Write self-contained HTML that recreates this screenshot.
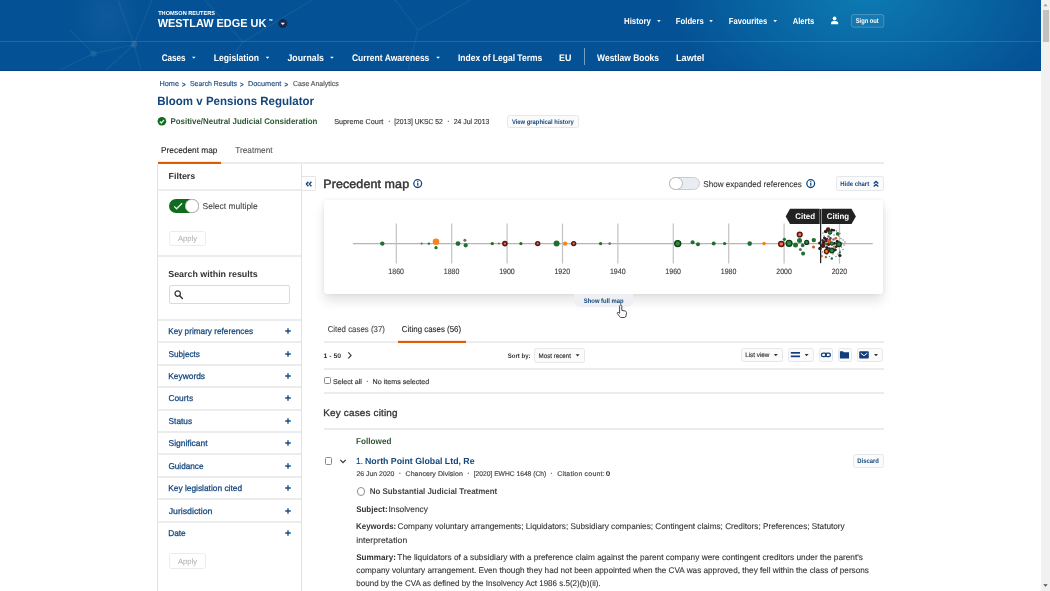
<!DOCTYPE html>
<html lang="en">
<head>
<meta charset="utf-8">
<title>Bloom v Pensions Regulator - Case Analytics | Westlaw Edge UK</title>
<style>
*{box-sizing:border-box;margin:0;padding:0}
html,body{width:1050px;height:591px;overflow:hidden;background:#fff;font-family:"Liberation Sans",sans-serif}
#page{position:relative;width:1050px;height:591px;overflow:hidden;background:#fff}
.t{position:absolute;white-space:pre;display:block;transform-origin:0 50%;text-rendering:geometricPrecision}
.a{position:absolute;display:block}
.hl{position:absolute;height:2px;background:#ececec}
.btn{position:absolute;border:1px solid #e6e7ea;border-radius:2.5px;background:#fbfbfc}
#hdr{left:0;top:0;width:1041px;height:70.5px;
 background:
  radial-gradient(ellipse 195px 125px at 865px -6px, rgba(14,126,181,.92), rgba(14,126,181,0) 100%),
  radial-gradient(ellipse 34px 40px at 106px 16px, rgba(255,255,255,.045), rgba(255,255,255,0) 100%),
  #045295;
 border-bottom:1px solid #03457f}
</style>
</head>
<body>
<div id="page">
<!-- header -->
<div id="hdr" class="a"></div>
<div class="a" style="left:0;top:41px;width:1041px;height:1px;background:rgba(255,255,255,.13)"></div>
<div class="a" style="left:584.3px;top:48px;width:1px;height:16.5px;background:rgba(255,255,255,.45)"></div>
<svg class="a" style="left:0;top:0" width="1041" height="70" viewBox="0 0 1041 70">
 <!-- decorative network -->
 <g stroke="#ffffff" stroke-opacity=".06" stroke-width="1.2" fill="none">
  <path d="M134 44.500L93.500 53.600L60 70M134 44.500L118 0M134 44.500L152 0M134 44.500L141 70M134 44.500L106 70M93.500 53.600L70 30"/>
  <path d="M205 0L243 42L312 0M243 42L222 70M395 0L418 30L470 0M418 30L408 70"/>
 </g>
 <circle cx="134" cy="44.500" r="3.200" fill="#fff" fill-opacity=".09"/>
 <circle cx="93.500" cy="53.600" r="3.200" fill="#fff" fill-opacity=".08"/>
 <!-- product dropdown -->
 <circle cx="282.8" cy="23.6" r="4.5" fill="#17294d"/>
 <path d="M280.6 22.7h4.4l-2.2 2.3z" fill="#fff"/>
 <!-- carets -->
 <g fill="#fff">
  <path d="M657.1 20.1h3.6l-1.8 2.1z"/><path d="M709.3 20.1h3.6l-1.8 2.1z"/><path d="M773.4 20.1h3.6l-1.8 2.1z"/>
  <path d="M192.0 56.7h3.6l-1.8 2.1z"/><path d="M265.7 56.7h3.6l-1.8 2.1z"/><path d="M330.1 56.7h3.6l-1.8 2.1z"/><path d="M436.3 56.7h3.6l-1.8 2.1z"/>
 </g>
 <!-- user -->
 <circle cx="834.6" cy="18.4" r="1.9" fill="#fff"/>
 <path d="M831 24.3v-1.2c0-1.4 1.7-2.3 3.6-2.3s3.6 .9 3.6 2.3v1.2z" fill="#fff"/>
 <rect x="851.4" y="14.6" width="32.4" height="12.6" rx="2" fill="#fff" fill-opacity=".05" stroke="#fff" stroke-opacity=".22"/>
</svg>

<!-- scrollbar -->
<div class="a" style="left:1041px;top:0;width:9px;height:591px;background:#f1f1f1"></div>
<div class="a" style="left:1042.5px;top:9.5px;width:6.3px;height:32.5px;background:#c1c1c1"></div>
<svg class="a" style="left:1041px;top:0" width="9" height="591" viewBox="0 0 9 591">
 <path d="M2.3 6.2L4.5 3.8L6.7 6.2z" fill="#a3a3a3"/><path d="M2.3 584.2L4.5 586.8L6.7 584.2z" fill="#505050"/>
</svg>

<!-- title area -->
<svg class="a" style="left:156px;top:115px" width="12" height="12" viewBox="0 0 12 12">
 <circle cx="5.9" cy="6.3" r="4.3" fill="#0f6a1a"/><path d="M3.800 6.500l1.500 1.500l2.700-3" stroke="#d8f7dc" stroke-width="1.300" fill="none"/>
</svg>
<div class="btn" style="left:507.2px;top:115.1px;width:71.5px;height:13.4px"></div>

<!-- tabs -->
<div class="hl" style="left:157.6px;top:162px;width:726px"></div>
<div class="a" style="left:157.6px;top:162px;width:63.8px;height:2px;background:#e05a00;box-shadow:0 -0.5px 0 rgba(224,90,0,.3)"></div>

<!-- sidebar -->
<div class="a" style="left:157.4px;top:164px;width:1px;height:427px;background:#e2e2e2"></div>
<div class="a" style="left:300.9px;top:164px;width:1px;height:427px;background:#e2e2e2"></div>
<div class="hl" style="left:158px;top:189px;width:143px"></div>
<div class="hl" style="left:158px;top:254.7px;width:143px"></div>
<!-- toggle on -->
<div class="a" style="left:169px;top:199px;width:29.5px;height:13.6px;border-radius:7px;background:#116b1e"></div>
<div class="a" style="left:185px;top:199px;width:13.6px;height:13.6px;border-radius:50%;background:#fff;border:1px solid #c4c4c4"></div>
<svg class="a" style="left:172px;top:201px" width="12" height="10" viewBox="0 0 12 10"><path d="M2.200 5.400l2.400 2.400l5.500-5.500" stroke="#dcf7df" stroke-width="1.300" fill="none"/></svg>
<div class="btn" style="left:169.3px;top:230.6px;width:36.5px;height:15.6px;background:#fff;border-color:#ececec"></div>
<div class="a" style="left:169.3px;top:284.8px;width:121.2px;height:18.9px;border:1px solid #dadada;border-radius:2px;background:#fff"></div>
<svg class="a" style="left:173px;top:289px" width="12" height="12" viewBox="0 0 12 12"><circle cx="4.7" cy="4.6" r="2.7" fill="none" stroke="#333" stroke-width="1.2"/><path d="M6.7 6.7l2.7 2.8" stroke="#333" stroke-width="1.4" stroke-linecap="round"/></svg>
<div class="hl" style="left:158px;top:318.75px;width:143px"></div>
<div class="hl" style="left:158px;top:341.25px;width:143px"></div>
<div class="hl" style="left:158px;top:363.65px;width:143px"></div>
<div class="hl" style="left:158px;top:386.05px;width:143px"></div>
<div class="hl" style="left:158px;top:408.55px;width:143px"></div>
<div class="hl" style="left:158px;top:430.95px;width:143px"></div>
<div class="hl" style="left:158px;top:453.35px;width:143px"></div>
<div class="hl" style="left:158px;top:475.75px;width:143px"></div>
<div class="hl" style="left:158px;top:498.15px;width:143px"></div>
<div class="hl" style="left:158px;top:520.55px;width:143px"></div>
<svg class="a" style="left:284px;top:327.3px" width="8" height="8" viewBox="0 0 8 8"><path d="M1.200 4H6.800M4 1.200V6.800" stroke="#1a4f88" stroke-width="1.400" fill="none"/></svg>
<svg class="a" style="left:284px;top:349.7px" width="8" height="8" viewBox="0 0 8 8"><path d="M1.200 4H6.800M4 1.200V6.800" stroke="#1a4f88" stroke-width="1.400" fill="none"/></svg>
<svg class="a" style="left:284px;top:372.1px" width="8" height="8" viewBox="0 0 8 8"><path d="M1.200 4H6.800M4 1.200V6.800" stroke="#1a4f88" stroke-width="1.400" fill="none"/></svg>
<svg class="a" style="left:284px;top:394.4px" width="8" height="8" viewBox="0 0 8 8"><path d="M1.200 4H6.800M4 1.200V6.800" stroke="#1a4f88" stroke-width="1.400" fill="none"/></svg>
<svg class="a" style="left:284px;top:416.8px" width="8" height="8" viewBox="0 0 8 8"><path d="M1.200 4H6.800M4 1.200V6.800" stroke="#1a4f88" stroke-width="1.400" fill="none"/></svg>
<svg class="a" style="left:284px;top:439.1px" width="8" height="8" viewBox="0 0 8 8"><path d="M1.200 4H6.800M4 1.200V6.800" stroke="#1a4f88" stroke-width="1.400" fill="none"/></svg>
<svg class="a" style="left:284px;top:461.7px" width="8" height="8" viewBox="0 0 8 8"><path d="M1.200 4H6.800M4 1.200V6.800" stroke="#1a4f88" stroke-width="1.400" fill="none"/></svg>
<svg class="a" style="left:284px;top:484.3px" width="8" height="8" viewBox="0 0 8 8"><path d="M1.200 4H6.800M4 1.200V6.800" stroke="#1a4f88" stroke-width="1.400" fill="none"/></svg>
<svg class="a" style="left:284px;top:506.7px" width="8" height="8" viewBox="0 0 8 8"><path d="M1.200 4H6.800M4 1.200V6.800" stroke="#1a4f88" stroke-width="1.400" fill="none"/></svg>
<svg class="a" style="left:284px;top:529.3px" width="8" height="8" viewBox="0 0 8 8"><path d="M1.200 4H6.800M4 1.200V6.800" stroke="#1a4f88" stroke-width="1.400" fill="none"/></svg>
<div class="btn" style="left:169.1px;top:553.2px;width:36.8px;height:15.8px;background:#fff;border-color:#ececec"></div>

<!-- main head -->
<div class="a" style="left:301.9px;top:176px;width:13.8px;height:14.6px;border:1px solid #e3e3e3;border-left:none;border-radius:0 2px 2px 0;background:#fff"></div>
<svg class="a" style="left:304px;top:179px" width="10" height="10" viewBox="0 0 10 10"><path d="M4.4 2.8L2.4 5l2 2.200M7.400 2.800L5.400 5l2 2.200" stroke="#14467c" stroke-width="1.400" fill="none"/></svg>
<svg class="a" style="left:412px;top:178px" width="12" height="12" viewBox="0 0 12 12"><circle cx="5.7" cy="5.6" r="3.9" fill="none" stroke="#14467c" stroke-width="1.3"/><rect x="5.1" y="5" width="1.3" height="2.7" fill="#14467c"/><rect x="5.1" y="3.2" width="1.3" height="1.2" fill="#14467c"/></svg>
<svg class="a" style="left:804.7px;top:178.1px" width="12" height="12" viewBox="0 0 12 12"><circle cx="5.7" cy="5.6" r="3.9" fill="none" stroke="#14467c" stroke-width="1.3"/><rect x="5.1" y="5" width="1.3" height="2.7" fill="#14467c"/><rect x="5.1" y="3.2" width="1.3" height="1.2" fill="#14467c"/></svg>
<!-- toggle off -->
<div class="a" style="left:669.2px;top:176.6px;width:30.7px;height:13.8px;border-radius:7px;background:#e9edf3;border:1px solid #c9cdd3"></div>
<div class="a" style="left:669.2px;top:176.6px;width:13.8px;height:13.8px;border-radius:50%;background:#fff;border:1px solid #b9b9b9"></div>
<div class="btn" style="left:835.5px;top:176.4px;width:48px;height:14.2px"></div>
<svg class="a" style="left:871px;top:179px" width="10" height="10" viewBox="0 0 10 10"><path d="M2.7 4.5L5 2.4l2.3 2.1M2.7 7.5L5 5.4l2.3 2.1" stroke="#14467c" stroke-width="1.35" fill="none"/></svg>

<!-- chart card -->
<div class="a" style="left:323.8px;top:200px;width:559.7px;height:93.6px;background:#fff;border-radius:3px;box-shadow:0 7px 12px rgba(0,0,0,.11),0 0 4px rgba(0,0,0,.07)"></div>
<div class="a" style="left:574.3px;top:293.6px;width:58.4px;height:13px;background:#eef0f3;border-radius:0 0 6px 6px"></div>
<svg class="a" style="left:324px;top:200px" width="560" height="94" viewBox="324 200 560 94">
<path d="M352.9 243.6H872.7" stroke="#b4b4b4" stroke-width="1.1" fill="none"/>
<path d="M396.3 223.6V263.6" stroke="#c2c2c2" stroke-width="1.2" fill="none"/>
<path d="M451.7 223.6V263.6" stroke="#c2c2c2" stroke-width="1.2" fill="none"/>
<path d="M507.1 223.6V263.6" stroke="#c2c2c2" stroke-width="1.2" fill="none"/>
<path d="M562.5 223.6V263.6" stroke="#c2c2c2" stroke-width="1.2" fill="none"/>
<path d="M617.9 223.6V263.6" stroke="#c2c2c2" stroke-width="1.2" fill="none"/>
<path d="M673.3 223.6V263.6" stroke="#c2c2c2" stroke-width="1.2" fill="none"/>
<path d="M728.7 223.6V263.6" stroke="#c2c2c2" stroke-width="1.2" fill="none"/>
<path d="M784.1 223.6V263.6" stroke="#c2c2c2" stroke-width="1.2" fill="none"/>
<path d="M839.5 223.6V263.6" stroke="#c2c2c2" stroke-width="1.2" fill="none"/>
<circle cx="382.3" cy="243.6" r="2.2" fill="#1f7030"/>
<circle cx="421.7" cy="243.6" r="1.1" fill="#6b6b6b"/>
<circle cx="428.9" cy="243.6" r="1.2" fill="#1f7030"/>
<circle cx="436.0" cy="241.8" r="3.3" fill="#f4841f"/>
<circle cx="436.0" cy="247.7" r="1.6" fill="#1f7030"/>
<circle cx="458.0" cy="243.6" r="2.4" fill="#1f7030"/>
<circle cx="464.9" cy="240.2" r="1.5" fill="#6b6b6b"/>
<circle cx="465.7" cy="245.3" r="2.1" fill="#1f7030"/>
<circle cx="492.3" cy="243.6" r="1.7" fill="#1f7030"/>
<circle cx="498.9" cy="243.6" r="1.0" fill="#6b6b6b"/>
<circle cx="504.9" cy="243.6" r="2.00" fill="#e9735c" stroke="#5e1610" stroke-width="1.6"/>
<circle cx="520.9" cy="243.6" r="1.6" fill="#1f7030"/>
<circle cx="537.7" cy="243.6" r="1.90" fill="#e9735c" stroke="#5e1610" stroke-width="1.6"/>
<circle cx="556.6" cy="243.6" r="3.0" fill="#1f7030"/>
<circle cx="565.1" cy="243.6" r="2.2" fill="#f4841f"/>
<circle cx="573.7" cy="243.6" r="1.90" fill="#e9735c" stroke="#5e1610" stroke-width="1.6"/>
<circle cx="600.6" cy="243.6" r="1.7" fill="#1f7030"/>
<circle cx="609.7" cy="243.6" r="1.3" fill="#6b6b6b"/>
<circle cx="677.7" cy="243.6" r="3.00" fill="#2c8a3f" stroke="#0c3f14" stroke-width="1.4"/>
<circle cx="692.6" cy="242.3" r="2.0" fill="#1f7030"/>
<circle cx="698.0" cy="244.3" r="2.0" fill="#1f7030"/>
<circle cx="713.7" cy="243.6" r="2.0" fill="#1f7030"/>
<circle cx="724.6" cy="243.6" r="1.6" fill="#1f7030"/>
<circle cx="749.7" cy="243.6" r="2.3" fill="#1f7030"/>
<circle cx="764.1" cy="243.6" r="1.8" fill="#f4841f"/>
<circle cx="781.3" cy="244.0" r="2.55" fill="#e9735c" stroke="#5e1610" stroke-width="1.5"/>
<circle cx="784.4" cy="239.3" r="1.6" fill="#1f7030"/>
<circle cx="789.1" cy="243.3" r="2.90" fill="#2c8a3f" stroke="#0c3f14" stroke-width="1.4"/>
<circle cx="795.5" cy="245.1" r="2.5" fill="#1f7030"/>
<circle cx="799.5" cy="240.4" r="2.5" fill="#1f7030"/>
<circle cx="799.7" cy="234.5" r="2.35" fill="#e9735c" stroke="#5e1610" stroke-width="1.5"/>
<circle cx="800.4" cy="249.4" r="1.5" fill="#6b6b6b"/>
<circle cx="802.7" cy="245.4" r="1.8" fill="#1f7030"/>
<circle cx="803.1" cy="253.5" r="2.0" fill="#1f7030"/>
<circle cx="806.7" cy="242.4" r="1.95" fill="#2c8a3f" stroke="#0c3f14" stroke-width="1.3"/>
<circle cx="813.8" cy="240.1" r="2.2" fill="#1f7030"/>
<circle cx="813.5" cy="247.1" r="1.5" fill="#d4552f"/>
<circle cx="819.6" cy="243.0" r="1.5" fill="#222222"/>
<circle cx="820.0" cy="248.5" r="1.8" fill="#222222"/>
<circle cx="821.6" cy="256.2" r="1.4" fill="#f4841f"/>
<circle cx="838.5" cy="236.0" r="0.7" fill="#777"/>
<circle cx="841.0" cy="238.5" r="0.7" fill="#777"/>
<circle cx="843.0" cy="240.0" r="0.7" fill="#777"/>
<circle cx="842.0" cy="243.0" r="0.7" fill="#777"/>
<circle cx="844.0" cy="245.0" r="0.7" fill="#777"/>
<circle cx="841.5" cy="247.0" r="0.7" fill="#777"/>
<circle cx="843.0" cy="249.5" r="0.7" fill="#777"/>
<circle cx="840.0" cy="251.0" r="0.7" fill="#777"/>
<circle cx="838.0" cy="254.0" r="0.7" fill="#777"/>
<circle cx="836.0" cy="256.5" r="0.7" fill="#777"/>
<circle cx="824.0" cy="236.0" r="0.7" fill="#777"/>
<circle cx="823.0" cy="233.0" r="0.7" fill="#777"/>
<circle cx="834.0" cy="235.0" r="0.7" fill="#777"/>
<circle cx="836.5" cy="231.0" r="0.7" fill="#777"/>
<circle cx="827.0" cy="254.5" r="0.7" fill="#777"/>
<circle cx="829.5" cy="256.5" r="0.7" fill="#777"/>
<circle cx="833.0" cy="254.0" r="0.7" fill="#777"/>
<circle cx="845.0" cy="242.0" r="0.7" fill="#777"/>
<circle cx="840.0" cy="233.5" r="0.7" fill="#777"/>
<circle cx="822.5" cy="252.0" r="0.7" fill="#777"/>
<circle cx="825.7" cy="231.5" r="1.8" fill="#222222"/>
<circle cx="831.8" cy="230.0" r="1.5" fill="#222222"/>
<circle cx="833.8" cy="230.2" r="1.3" fill="#222222"/>
<circle cx="828.1" cy="229.5" r="2.2" fill="#5e1610"/>
<circle cx="830.0" cy="232.5" r="1.80" fill="#2c8a3f" stroke="#0c3f14" stroke-width="1.0"/>
<circle cx="837.6" cy="233.9" r="1.8" fill="#1f7030"/>
<circle cx="826.4" cy="240.0" r="2.2" fill="#5e1610"/>
<circle cx="829.1" cy="241.0" r="2.2" fill="#d4552f"/>
<circle cx="835.8" cy="238.3" r="1.4" fill="#d4552f"/>
<circle cx="823.6" cy="242.4" r="1.8" fill="#222222"/>
<circle cx="823.0" cy="245.8" r="2.3" fill="#5e1610"/>
<circle cx="826.6" cy="244.0" r="1.5" fill="#1f7030"/>
<circle cx="831.8" cy="243.6" r="1.70" fill="#2c8a3f" stroke="#0c3f14" stroke-width="1.0"/>
<circle cx="837.2" cy="241.3" r="1.5" fill="#222222"/>
<circle cx="834.2" cy="246.7" r="1.4" fill="#e9735c"/>
<circle cx="838.9" cy="244.3" r="2.35" fill="#2c8a3f" stroke="#0c3f14" stroke-width="1.3"/>
<circle cx="826.5" cy="251.5" r="2.05" fill="#f4841f" stroke="#5e1610" stroke-width="1.3"/>
<circle cx="831.8" cy="250.5" r="2.35" fill="#2c8a3f" stroke="#0c3f14" stroke-width="1.3"/>
<circle cx="835.2" cy="249.8" r="1.5" fill="#222222"/>
<circle cx="831.8" cy="258.5" r="1.2" fill="#1f7030"/>
<circle cx="839.9" cy="255.5" r="1.6" fill="#222222"/>
<circle cx="825.9" cy="257.1" r="1.2" fill="#6b6b6b"/>
<circle cx="839.9" cy="252.5" r="1.0" fill="#1f7030"/>
<circle cx="828.5" cy="236.5" r="1.3" fill="#6b6b6b"/>
<circle cx="833.5" cy="239.5" r="1.2" fill="#6b6b6b"/>
<circle cx="824.5" cy="238.0" r="1.5" fill="#222222"/>
<circle cx="826.8" cy="247.6" r="1.6" fill="#222222"/>
<circle cx="829.2" cy="248.6" r="1.4" fill="#333"/>
<circle cx="834.6" cy="243.4" r="1.4" fill="#222222"/>
<circle cx="836.2" cy="246.8" r="1.3" fill="#222222"/>
<circle cx="828.6" cy="244.6" r="1.5" fill="#5e1610"/>
<circle cx="830.4" cy="238.4" r="1.3" fill="#444"/>
<circle cx="822.6" cy="240.2" r="1.3" fill="#333"/>
<path d="M820.6 209V263.2" stroke="#222" stroke-width="1.25" fill="none"/>
<path d="M785.7 216.5L790 208.8H819.7V224.1H790z" fill="#222"/>
<path d="M821.6 208.8H851.5L855.9 216.5L851.5 224.1H821.6z" fill="#222"/>
</svg>
<!-- cursor -->
<svg class="a" style="left:613px;top:303px" width="18" height="18" viewBox="0 0 18 18"><path d="M7.2 2.2c.9-.4 1.6.2 1.6 1v4.2l3.3.6c1 .2 1.5.9 1.400 1.800l-.5 3.200c-.1.900-.800 1.500-1.700 1.500h-3.200c-.6 0-1.100-.3-1.500-.8l-2.300-3.300c-.4-.600.300-1.400 1-1l1.300.9v-7c0-.5.200-.9.600-1.100z" fill="#fff" stroke="#333" stroke-width=".9"/></svg>

<!-- list area -->
<div class="hl" style="left:324px;top:341px;width:560px"></div>
<div class="a" style="left:397.5px;top:341px;width:68px;height:2px;background:#e05a00;box-shadow:0 -0.5px 0 rgba(224,90,0,.3)"></div>
<svg class="a" style="left:345px;top:350px" width="10" height="10" viewBox="0 0 10 10"><path d="M3.3 2.4l2.800 3l-2.800 3" stroke="#333" stroke-width="1.1" fill="none"/></svg>
<div class="btn" style="left:534.2px;top:348px;width:50.7px;height:14.5px"></div>
<div class="btn" style="left:740.6px;top:347.5px;width:42.8px;height:14.7px"></div>
<div class="btn" style="left:788px;top:347.5px;width:25.9px;height:14.7px"></div>
<div class="btn" style="left:818.5px;top:347.5px;width:14.5px;height:14.7px"></div>
<div class="btn" style="left:837.5px;top:347.5px;width:14.9px;height:14.7px"></div>
<div class="btn" style="left:857px;top:347.5px;width:26.2px;height:14.7px"></div>
<svg class="a" style="left:534px;top:347px" width="350" height="16" viewBox="534 347 350 16">
 <g fill="#333"><path d="M575.600 354.200h4l-2 2.200z"/><path d="M773.800 354h4l-2 2.200z"/><path d="M804.600 354h4l-2 2.200z"/><path d="M874 354h4l-2 2.200z"/></g>
 <g fill="#123f7c">
  <rect x="790.800" y="352" width="9.200" height="1.700"/><rect x="790.800" y="355.500" width="9.200" height="1.700"/>
  <path d="M839.900 351.200h3l.9 1h5.200v6.400h-9.100z"/>
  <rect x="859.200" y="351.300" width="9.600" height="7.200" rx="1"/>
 </g>
 <path d="M860.700 353.200l3.300 2.500l3.300-2.500" stroke="#fff" stroke-width="1" fill="none"/>
 <g fill="none" stroke="#123f7c" stroke-width="1.300"><rect x="821.400" y="353.100" width="5" height="3.600" rx="1.800"/><rect x="825.400" y="353.100" width="5" height="3.600" rx="1.800"/></g>
</svg>
<div class="hl" style="left:324px;top:367.700px;width:560px"></div>
<div class="a" style="left:324px;top:377.4px;width:7px;height:7px;border:1px solid #8a8a8a;border-radius:1.5px;background:#fff"></div>
<div class="hl" style="left:324px;top:392.4px;width:560px"></div>
<div class="hl" style="left:324px;top:428px;width:560px"></div>
<div class="a" style="left:324.6px;top:457.2px;width:7.5px;height:7.5px;border:1px solid #8a8a8a;border-radius:1.5px;background:#fff"></div>
<svg class="a" style="left:338px;top:456px" width="10" height="10" viewBox="0 0 10 10"><path d="M2.300 3.900L5 6.600l2.700-2.700" stroke="#333" stroke-width="1.200" fill="none"/></svg>
<div class="btn" style="left:852.5px;top:454.1px;width:31.2px;height:13.5px"></div>
<div class="a" style="left:356.6px;top:487.4px;width:8.4px;height:8.4px;border:1px solid #8f8f8f;border-radius:50%;background:#fff"></div>

<div id="txt" style="position:absolute;left:0;top:0;width:1041px;height:591px;will-change:transform">
<span class="t" style="left:158px;top:9px;line-height:8px;font-size:5.8px;font-weight:700;color:#ffffff;transform:translate(0.20px,0.77px) scaleX(0.9623);">THOMSON REUTERS</span>
<span class="t" style="left:157px;top:15px;line-height:16px;font-size:11.6px;font-weight:700;color:#ffffff;transform:translate(0.68px,0.50px) scaleX(0.9427);">WESTLAW EDGE UK</span>
<span class="t" style="left:269px;top:18px;line-height:6px;font-size:4.2px;font-weight:400;color:#ffffff;transform:translate(0.02px,0.08px) scaleX(0.8498);-webkit-text-stroke:0.16px #ffffff;">™</span>
<span class="t" style="left:624px;top:15px;line-height:12px;font-size:8.8px;font-weight:700;color:#ffffff;transform:translate(0.07px,0.00px) scaleX(0.8832);">History</span>
<span class="t" style="left:675px;top:15px;line-height:12px;font-size:8.8px;font-weight:700;color:#ffffff;transform:translate(0.82px,0.00px) scaleX(0.8777);">Folders</span>
<span class="t" style="left:728px;top:15px;line-height:12px;font-size:8.8px;font-weight:700;color:#ffffff;transform:translate(0.83px,0.00px) scaleX(0.8625);">Favourites</span>
<span class="t" style="left:792px;top:15px;line-height:12px;font-size:8.8px;font-weight:700;color:#ffffff;transform:translate(0.78px,0.00px) scaleX(0.8589);">Alerts</span>
<span class="t" style="left:855px;top:16px;line-height:10px;font-size:6.8px;font-weight:700;color:#ffffff;letter-spacing:-0.021px;transform:translate(0.72px,0.98px) scaleX(0.8529);">Sign out</span>
<span class="t" style="left:161px;top:51px;line-height:13px;font-size:9.6px;font-weight:700;color:#ffffff;transform:translate(0.65px,0.95px) scaleX(0.8478);">Cases</span>
<span class="t" style="left:213px;top:51px;line-height:13px;font-size:9.6px;font-weight:700;color:#ffffff;transform:translate(0.87px,0.95px) scaleX(0.8910);">Legislation</span>
<span class="t" style="left:287px;top:51px;line-height:13px;font-size:9.6px;font-weight:700;color:#ffffff;transform:translate(0.50px,0.95px) scaleX(0.9107);">Journals</span>
<span class="t" style="left:351px;top:51px;line-height:13px;font-size:9.6px;font-weight:700;color:#ffffff;transform:translate(0.95px,0.95px) scaleX(0.8849);">Current Awareness</span>
<span class="t" style="left:457px;top:51px;line-height:13px;font-size:9.6px;font-weight:700;color:#ffffff;transform:translate(0.97px,0.95px) scaleX(0.8842);">Index of Legal Terms</span>
<span class="t" style="left:559px;top:51px;line-height:13px;font-size:9.6px;font-weight:700;color:#ffffff;transform:translate(0.05px,0.95px) scaleX(0.9222);">EU</span>
<span class="t" style="left:597px;top:51px;line-height:13px;font-size:9.6px;font-weight:700;color:#ffffff;transform:translate(0.10px,0.95px) scaleX(0.8819);">Westlaw Books</span>
<span class="t" style="left:676px;top:51px;line-height:13px;font-size:9.6px;font-weight:700;color:#ffffff;transform:translate(0.03px,0.95px) scaleX(0.9475);">Lawtel</span>
<span class="t" style="left:159px;top:78px;line-height:10px;font-size:7.2px;font-weight:400;color:#1b4a7e;transform:translate(0.55px,0.90px) scaleX(1.0113);-webkit-text-stroke:0.15px #1b4a7e;">Home</span>
<span class="t" style="left:181px;top:79px;line-height:10px;font-size:7.4px;font-weight:400;color:#14467c;transform:translate(0.91px,0.91px) scaleX(0.8378);-webkit-text-stroke:0.3px #14467c;">&gt;</span>
<span class="t" style="left:189px;top:78px;line-height:10px;font-size:7.2px;font-weight:400;color:#1b4a7e;transform:translate(1.00px,0.90px) scaleX(0.9637);-webkit-text-stroke:0.15px #1b4a7e;">Search Results</span>
<span class="t" style="left:240px;top:79px;line-height:10px;font-size:7.4px;font-weight:400;color:#14467c;transform:translate(0.01px,0.91px) scaleX(0.8378);-webkit-text-stroke:0.3px #14467c;">&gt;</span>
<span class="t" style="left:247px;top:78px;line-height:10px;font-size:7.2px;font-weight:400;color:#1b4a7e;transform:translate(0.93px,0.90px) scaleX(1.0193);-webkit-text-stroke:0.15px #1b4a7e;">Document</span>
<span class="t" style="left:284px;top:79px;line-height:10px;font-size:7.4px;font-weight:400;color:#14467c;transform:translate(0.51px,0.91px) scaleX(0.8378);-webkit-text-stroke:0.3px #14467c;">&gt;</span>
<span class="t" style="left:293px;top:78px;line-height:10px;font-size:7.2px;font-weight:400;color:#555555;transform:translate(0.04px,0.90px) scaleX(0.9683);-webkit-text-stroke:0.16px #555555;">Case Analytics</span>
<span class="t" style="left:157px;top:92px;line-height:17px;font-size:11.9px;font-weight:700;color:#14467c;transform:translate(0.25px,0.70px) scaleX(0.9686);">Bloom v Pensions Regulator</span>
<span class="t" style="left:170px;top:115px;line-height:12px;font-size:8.3px;font-weight:700;color:#2e5634;transform:translate(0.51px,0.20px) scaleX(0.9534);">Positive/Neutral Judicial Consideration</span>
<span class="t" style="left:334px;top:116px;line-height:10px;font-size:7.2px;font-weight:400;color:#3a3a3a;transform:translate(0.22px,0.90px) scaleX(1.0073);-webkit-text-stroke:0.16px #3a3a3a;">Supreme Court</span>
<span class="t" style="left:388px;top:115px;line-height:11px;font-size:8px;font-weight:700;color:#777;transform:translate(0.34px,0.80px) scaleX(1.0000);">·</span>
<span class="t" style="left:394px;top:116px;line-height:10px;font-size:7.2px;font-weight:400;color:#3a3a3a;transform:translate(0.20px,0.90px) scaleX(0.9349);-webkit-text-stroke:0.16px #3a3a3a;">[2013] UKSC 52</span>
<span class="t" style="left:447px;top:115px;line-height:11px;font-size:8px;font-weight:700;color:#777;transform:translate(0.30px,0.80px) scaleX(1.0000);">·</span>
<span class="t" style="left:453px;top:116px;line-height:10px;font-size:7.2px;font-weight:400;color:#3a3a3a;transform:translate(0.78px,0.90px) scaleX(0.9563);-webkit-text-stroke:0.16px #3a3a3a;">24 Jul 2013</span>
<span class="t" style="left:511px;top:118px;line-height:9px;font-size:6.6px;font-weight:700;color:#14467c;transform:translate(0.95px,0.35px) scaleX(0.8851);">View graphical history</span>
<span class="t" style="left:161px;top:144px;line-height:12px;font-size:8.5px;font-weight:400;color:#222;transform:translate(0.05px,0.10px) scaleX(0.9782);-webkit-text-stroke:0.1px #222;">Precedent map</span>
<span class="t" style="left:235px;top:144px;line-height:12px;font-size:8.5px;font-weight:400;color:#555;transform:translate(0.27px,0.10px) scaleX(0.9709);-webkit-text-stroke:0.1px #555;">Treatment</span>
<span class="t" style="left:168px;top:170px;line-height:12px;font-size:8.8px;font-weight:700;color:#333333;transform:translate(0.54px,0.30px) scaleX(1.0117);">Filters</span>
<span class="t" style="left:202px;top:200px;line-height:12px;font-size:8.5px;font-weight:400;color:#444;transform:translate(0.60px,0.40px) scaleX(0.9971);-webkit-text-stroke:0.1px #444;">Select multiple</span>
<span class="t" style="left:178px;top:233px;line-height:11px;font-size:7.8px;font-weight:400;color:#aaaaaa;transform:translate(0.00px,0.10px) scaleX(0.9789);">Apply</span>
<span class="t" style="left:168px;top:267px;line-height:12px;font-size:8.9px;font-weight:700;color:#333333;transform:translate(0.23px,0.70px) scaleX(1.0019);">Search within results</span>
<span class="t" style="left:168px;top:325px;line-height:12px;font-size:8.5px;font-weight:400;color:#14467c;transform:translate(0.16px,0.40px) scaleX(0.9662);-webkit-text-stroke:0.25px #14467c;">Key primary references</span>
<span class="t" style="left:168px;top:347px;line-height:12px;font-size:8.5px;font-weight:400;color:#14467c;transform:translate(0.54px,0.70px) scaleX(0.9635);-webkit-text-stroke:0.25px #14467c;">Subjects</span>
<span class="t" style="left:168px;top:370px;line-height:12px;font-size:8.5px;font-weight:400;color:#14467c;transform:translate(0.14px,0.10px) scaleX(0.9893);-webkit-text-stroke:0.25px #14467c;">Keywords</span>
<span class="t" style="left:168px;top:392px;line-height:12px;font-size:8.5px;font-weight:400;color:#14467c;transform:translate(0.41px,0.40px) scaleX(0.9848);-webkit-text-stroke:0.25px #14467c;">Courts</span>
<span class="t" style="left:168px;top:414px;line-height:12px;font-size:8.5px;font-weight:400;color:#14467c;transform:translate(0.54px,0.80px) scaleX(0.9760);-webkit-text-stroke:0.25px #14467c;">Status</span>
<span class="t" style="left:168px;top:437px;line-height:12px;font-size:8.5px;font-weight:400;color:#14467c;transform:translate(0.54px,0.10px) scaleX(0.9928);-webkit-text-stroke:0.25px #14467c;">Significant</span>
<span class="t" style="left:168px;top:459px;line-height:12px;font-size:8.5px;font-weight:400;color:#14467c;transform:translate(0.42px,0.70px) scaleX(0.9623);-webkit-text-stroke:0.25px #14467c;">Guidance</span>
<span class="t" style="left:168px;top:482px;line-height:12px;font-size:8.5px;font-weight:400;color:#14467c;transform:translate(0.15px,0.30px) scaleX(0.9840);-webkit-text-stroke:0.25px #14467c;">Key legislation cited</span>
<span class="t" style="left:168px;top:504px;line-height:12px;font-size:8.5px;font-weight:400;color:#14467c;transform:translate(0.66px,0.70px) scaleX(1.0285);-webkit-text-stroke:0.25px #14467c;">Jurisdiction</span>
<span class="t" style="left:168px;top:527px;line-height:12px;font-size:8.5px;font-weight:400;color:#14467c;transform:translate(0.15px,0.30px) scaleX(0.9796);-webkit-text-stroke:0.25px #14467c;">Date</span>
<span class="t" style="left:178px;top:555px;line-height:11px;font-size:7.8px;font-weight:400;color:#aaaaaa;transform:translate(0.00px,0.70px) scaleX(0.9789);">Apply</span>
<span class="t" style="left:323px;top:176px;line-height:17px;font-size:12px;font-weight:400;color:#333333;letter-spacing:0.100px;transform:translate(0.22px,0.09px) scaleX(1.0400);-webkit-text-stroke:0.45px #333;">Precedent map</span>
<span class="t" style="left:703px;top:177px;line-height:12px;font-size:8.5px;font-weight:400;color:#333333;transform:translate(0.36px,0.60px) scaleX(0.9503);-webkit-text-stroke:0.1px #333333;">Show expanded references</span>
<span class="t" style="left:840px;top:179px;line-height:9px;font-size:6.6px;font-weight:700;color:#14467c;transform:translate(0.23px,0.95px) scaleX(0.8954);">Hide chart</span>
<span class="t" style="left:583px;top:296px;line-height:9px;font-size:6.6px;font-weight:700;color:#14467c;transform:translate(0.81px,0.50px) scaleX(0.8916);">Show full map</span>
<span class="t" style="left:327px;top:323px;line-height:12px;font-size:8.5px;font-weight:400;color:#444;transform:translate(0.63px,0.20px) scaleX(0.9255);-webkit-text-stroke:0.1px #444;">Cited cases (37)</span>
<span class="t" style="left:401px;top:323px;line-height:12px;font-size:8.5px;font-weight:400;color:#222;transform:translate(0.83px,0.20px) scaleX(0.9295);-webkit-text-stroke:0.1px #222;">Citing cases (56)</span>
<span class="t" style="left:323px;top:351px;line-height:9px;font-size:6.6px;font-weight:700;color:#333333;transform:translate(0.45px,0.55px) scaleX(1.0426);">1 - 50</span>
<span class="t" style="left:507px;top:351px;line-height:9px;font-size:6.6px;font-weight:700;color:#333333;transform:translate(0.81px,0.75px) scaleX(0.9100);">Sort by:</span>
<span class="t" style="left:538px;top:351px;line-height:9px;font-size:6.6px;font-weight:400;color:#333333;transform:translate(0.62px,0.78px) scaleX(0.9386);-webkit-text-stroke:0.16px #333333;">Most recent</span>
<span class="t" style="left:745px;top:350px;line-height:9px;font-size:6.6px;font-weight:400;color:#333333;transform:translate(0.21px,0.70px) scaleX(0.9569);-webkit-text-stroke:0.16px #333333;">List view</span>
<span class="t" style="left:332px;top:377px;line-height:10px;font-size:7.0px;font-weight:400;color:#333333;transform:translate(0.91px,0.66px) scaleX(1.0196);-webkit-text-stroke:0.16px #333333;">Select all</span>
<span class="t" style="left:366px;top:375px;line-height:11px;font-size:8px;font-weight:700;color:#777;transform:translate(0.20px,0.50px) scaleX(1.0000);">·</span>
<span class="t" style="left:372px;top:377px;line-height:10px;font-size:7.0px;font-weight:400;color:#333333;transform:translate(0.54px,0.67px) scaleX(1.0202);-webkit-text-stroke:0.16px #333333;">No items selected</span>
<span class="t" style="left:323px;top:406px;line-height:13px;font-size:9.6px;font-weight:400;color:#333333;letter-spacing:0.154px;transform:translate(0.28px,0.80px) scaleX(1.0363);-webkit-text-stroke:0.3px #333;">Key cases citing</span>
<span class="t" style="left:356px;top:435px;line-height:12px;font-size:8.5px;font-weight:700;color:#2e5634;transform:translate(0.09px,0.20px) scaleX(0.9593);">Followed</span>
<span class="t" style="left:356px;top:454px;line-height:12px;font-size:8.9px;font-weight:400;color:#14467c;transform:translate(0.09px,0.80px) scaleX(0.9622);-webkit-text-stroke:0.1px #14467c;">1.</span>
<span class="t" style="left:365px;top:454px;line-height:12px;font-size:8.9px;font-weight:700;color:#14467c;transform:translate(0.04px,0.80px) scaleX(0.9873);">North Point Global Ltd, Re</span>
<span class="t" style="left:857px;top:456px;line-height:9px;font-size:6.6px;font-weight:700;color:#14467c;transform:translate(0.26px,0.60px) scaleX(0.8904);">Discard</span>
<span class="t" style="left:356px;top:469px;line-height:10px;font-size:6.8px;font-weight:400;color:#444;transform:translate(0.47px,0.84px) scaleX(1.0153);-webkit-text-stroke:0.16px #444;">26 Jun 2020</span>
<span class="t" style="left:398px;top:467px;line-height:11px;font-size:8px;font-weight:700;color:#777;transform:translate(0.70px,0.70px) scaleX(1.0000);">·</span>
<span class="t" style="left:405px;top:469px;line-height:10px;font-size:6.8px;font-weight:400;color:#444;letter-spacing:0.050px;transform:translate(0.52px,0.84px) scaleX(1.0308);-webkit-text-stroke:0.16px #444;">Chancery Division</span>
<span class="t" style="left:467px;top:467px;line-height:11px;font-size:8px;font-weight:700;color:#777;transform:translate(0.20px,0.70px) scaleX(1.0000);">·</span>
<span class="t" style="left:473px;top:469px;line-height:10px;font-size:6.8px;font-weight:400;color:#444;transform:translate(0.68px,0.85px) scaleX(0.9846);-webkit-text-stroke:0.16px #444;">[2020] EWHC 1648 (Ch)</span>
<span class="t" style="left:550px;top:467px;line-height:11px;font-size:8px;font-weight:700;color:#777;transform:translate(0.34px,0.70px) scaleX(1.0000);">·</span>
<span class="t" style="left:557px;top:469px;line-height:10px;font-size:6.8px;font-weight:400;color:#444;letter-spacing:0.190px;transform:translate(0.23px,0.84px) scaleX(1.0280);-webkit-text-stroke:0.16px #444;">Citation count:</span>
<span class="t" style="left:605px;top:469px;line-height:10px;font-size:6.8px;font-weight:700;color:#333;transform:translate(0.75px,0.77px) scaleX(1.1841);">0</span>
<span class="t" style="left:369px;top:485px;line-height:12px;font-size:8.3px;font-weight:700;color:#444;transform:translate(0.69px,0.30px) scaleX(0.9566);">No Substantial Judicial Treatment</span>
<span class="t" style="left:356px;top:502px;line-height:12px;font-size:8.3px;font-weight:700;color:#333333;transform:translate(0.13px,0.70px) scaleX(0.9631);">Subject:</span>
<span class="t" style="left:388px;top:502px;line-height:12px;font-size:8.3px;font-weight:400;color:#333333;transform:translate(0.45px,0.70px) scaleX(1.0061);-webkit-text-stroke:0.1px #333333;">Insolvency</span>
<span class="t" style="left:356px;top:520px;line-height:12px;font-size:8.3px;font-weight:700;color:#333333;transform:translate(0.11px,0.20px) scaleX(0.9460);">Keywords:</span>
<span class="t" style="left:397px;top:520px;line-height:12px;font-size:8.3px;font-weight:400;color:#333333;transform:translate(0.57px,0.20px) scaleX(0.9893);-webkit-text-stroke:0.1px #333333;">Company voluntary arrangements; Liquidators; Subsidiary companies; Contingent claims; Creditors; Preferences; Statutory</span>
<span class="t" style="left:356px;top:533px;line-height:12px;font-size:8.3px;font-weight:400;color:#333333;letter-spacing:0.070px;transform:translate(0.23px,0.80px) scaleX(1.0331);-webkit-text-stroke:0.1px #333333;">interpretation</span>
<span class="t" style="left:356px;top:551px;line-height:12px;font-size:8.3px;font-weight:700;color:#333333;transform:translate(0.13px,0.00px) scaleX(0.9788);">Summary:</span>
<span class="t" style="left:397px;top:551px;line-height:12px;font-size:8.3px;font-weight:400;color:#333333;transform:translate(0.37px,0.00px) scaleX(0.9982);-webkit-text-stroke:0.1px #333333;">The liquidators of a subsidiary with a preference claim against the parent company were contingent creditors under the parent&#x27;s</span>
<span class="t" style="left:356px;top:563px;line-height:12px;font-size:8.3px;font-weight:400;color:#333333;transform:translate(0.37px,0.88px) scaleX(0.9881);-webkit-text-stroke:0.1px #333333;">company voluntary arrangement. Even though they had not been appointed when the CVA was approved, they fell within the class of persons</span>
<span class="t" style="left:356px;top:576px;line-height:12px;font-size:8.3px;font-weight:400;color:#333333;transform:translate(0.34px,0.90px) scaleX(0.9653);-webkit-text-stroke:0.1px #333333;">bound by the CVA as defined by the Insolvency Act 1986 s.5(2)(b)(ii).</span>
<span class="t" style="left:795px;top:211px;line-height:11px;font-size:8.2px;font-weight:700;color:#ffffff;transform:translate(0.25px,0.00px) scaleX(0.9686);">Cited</span>
<span class="t" style="left:826px;top:211px;line-height:11px;font-size:8.2px;font-weight:700;color:#ffffff;transform:translate(0.75px,0.00px) scaleX(0.9668);">Citing</span>
<span class="t" style="left:388px;top:265px;line-height:11px;font-size:7.8px;font-weight:400;color:#3c3c3c;transform:translate(0.36px,0.80px) scaleX(0.8998);-webkit-text-stroke:0.12px #3c3c3c;">1860</span>
<span class="t" style="left:443px;top:265px;line-height:11px;font-size:7.8px;font-weight:400;color:#3c3c3c;transform:translate(0.76px,0.80px) scaleX(0.8998);-webkit-text-stroke:0.12px #3c3c3c;">1880</span>
<span class="t" style="left:499px;top:265px;line-height:11px;font-size:7.8px;font-weight:400;color:#3c3c3c;transform:translate(0.16px,0.80px) scaleX(0.8998);-webkit-text-stroke:0.12px #3c3c3c;">1900</span>
<span class="t" style="left:554px;top:265px;line-height:11px;font-size:7.8px;font-weight:400;color:#3c3c3c;transform:translate(0.40px,0.80px) scaleX(0.9093);-webkit-text-stroke:0.12px #3c3c3c;">1920</span>
<span class="t" style="left:609px;top:265px;line-height:11px;font-size:7.8px;font-weight:400;color:#3c3c3c;transform:translate(0.96px,0.80px) scaleX(0.8998);-webkit-text-stroke:0.12px #3c3c3c;">1940</span>
<span class="t" style="left:665px;top:265px;line-height:11px;font-size:7.8px;font-weight:400;color:#3c3c3c;transform:translate(0.36px,0.80px) scaleX(0.8998);-webkit-text-stroke:0.12px #3c3c3c;">1960</span>
<span class="t" style="left:720px;top:265px;line-height:11px;font-size:7.8px;font-weight:400;color:#3c3c3c;transform:translate(0.76px,0.80px) scaleX(0.8998);-webkit-text-stroke:0.12px #3c3c3c;">1980</span>
<span class="t" style="left:776px;top:265px;line-height:11px;font-size:7.8px;font-weight:400;color:#3c3c3c;transform:translate(0.27px,0.80px) scaleX(0.8933);-webkit-text-stroke:0.12px #3c3c3c;">2000</span>
<span class="t" style="left:831px;top:265px;line-height:11px;font-size:7.8px;font-weight:400;color:#3c3c3c;transform:translate(0.67px,0.80px) scaleX(0.8933);-webkit-text-stroke:0.12px #3c3c3c;">2020</span>
</div>
</div>
</body>
</html>
